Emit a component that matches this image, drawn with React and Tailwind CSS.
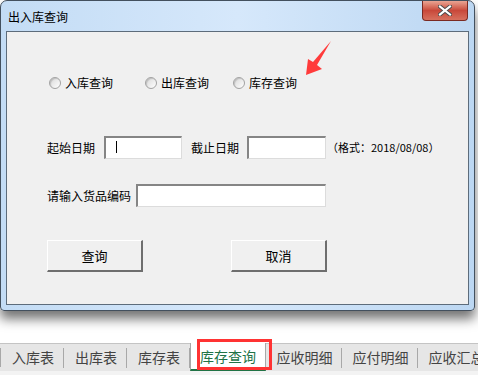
import React from 'react'

const cjk = { fontFamily: '"Noto Sans CJK SC", "Liberation Sans", sans-serif' }

const Radio = ({ label, width }) => (
  <div className="flex items-center gap-[4px]" style={{ width }}>
    <span className="w-[12px] h-[12px] rounded-full border border-[#a2a2a2] bg-gradient-to-br from-[#d8d8d8] to-white shadow-[inset_1px_1px_1px_rgba(0,0,0,0.15)]"></span>
    <span className="text-[12px] leading-none text-black">{label}</span>
  </div>
)

const Field = ({ width, cursor }) => (
  <div
    className="relative h-[23px] bg-white border-t-2 border-l-2 border-t-[#858585] border-l-[#858585] border-r border-b border-r-[#dcdcdc] border-b-[#dcdcdc]"
    style={{ width }}
  >
    {cursor && <span className="absolute left-[10px] top-[3px] w-[1px] h-[12px] bg-black"></span>}
  </div>
)

const Button = ({ children }) => (
  <button className="w-[96px] h-[32px] bg-[#f0f0f0] border-t border-l border-t-white border-l-white border-r-2 border-b-2 border-r-[#6e6e6e] border-b-[#6e6e6e] text-[13px] leading-none text-black">
    {children}
  </button>
)

const tabs = [
  { name: '入库表', w: 63 },
  { name: '出库表', w: 63 },
  { name: '库存表', w: 63 },
  { name: '库存查询', w: 76, active: true },
  { name: '应收明细', w: 76 },
  { name: '应付明细', w: 76 },
  { name: '应收汇总', w: 76 },
]

export default function App() {
  return (
    <div className="relative w-[478px] h-[375px] bg-white overflow-hidden" style={cjk}>
      {/* dialog window */}
      <div className="w-[475px] h-[311px] rounded-t-[7px] rounded-b-[4px] border border-[#43505e] bg-gradient-to-r from-[#c3dcf5] via-[#d6e8fb] to-[#bcd7f2] shadow-[0_8px_12px_rgba(0,0,0,0.55)]">
        <div className="h-[30px] flex justify-between">
          <span className="pl-[7px] pt-[10px] text-[12px] leading-none text-black">出入库查询</span>
          <div className="mr-[6px] w-[46px] h-[20px] rounded-b-[4px] border border-t-0 border-[#7a2a22] bg-gradient-to-b from-[#e9a493] via-[#c8483a] to-[#d7705e] flex items-center justify-center">
            <svg width="14" height="11" viewBox="0 0 14 11">
              <path d="M2 1.5 L12 9.5 M12 1.5 L2 9.5" stroke="#4a4a4a" strokeWidth="4" strokeLinecap="square" />
              <path d="M2 1.5 L12 9.5 M12 1.5 L2 9.5" stroke="#fff" strokeWidth="2.2" strokeLinecap="square" />
            </svg>
          </div>
        </div>
        <div className="mx-[5px] h-[274px] border border-[#5d6c7b] bg-[#f0f0f0]">
          <div className="mt-[43px] pl-[42px] h-[16px] flex items-center">
            <Radio label="入库查询" width={96} />
            <Radio label="出库查询" width={88} />
            <Radio label="库存查询" width={88} />
          </div>
          <div className="mt-[45px] pl-[40px] flex items-center">
            <span className="w-[48px] text-[12px] leading-none">起始日期</span>
            <div className="ml-[9px]"><Field width={78} cursor /></div>
            <span className="ml-[9px] w-[48px] text-[12px] leading-none">截止日期</span>
            <div className="ml-[8px]"><Field width={79} /></div>
            <span className="ml-[1px] text-[11px] leading-none whitespace-nowrap">（格式：2018/08/08）</span>
          </div>
          <div className="mt-[25px] pl-[40px] flex items-center">
            <span className="w-[84px] text-[12px] leading-none">请输入货品编码</span>
            <div className="ml-[5px]"><Field width={190} /></div>
          </div>
          <div className="mt-[33px] pl-[40px] flex gap-[88px]">
            <Button>查询</Button>
            <Button>取消</Button>
          </div>
        </div>
      </div>

      {/* red annotation arrow */}
      <svg className="absolute left-0 top-0" width="478" height="100">
        <polygon points="331,41 317,65 322,69 306,75 308,59 313,62" fill="#ff3b3b" />
      </svg>

      {/* sheet tabs */}
      <div className="mt-[32px] h-[28px] border-t border-[#c4c4c4] bg-[#e6e6e6] flex items-stretch whitespace-nowrap">
        <div className="w-[8px] border-r border-[#a8a8a8] my-[4px]"></div>
        {tabs.map((t) =>
          t.active ? (
            <div
              key={t.name}
              className="shrink-0 -mt-px bg-white border-x border-[#a8a8a8] border-b-2 border-b-[#217346] flex items-center justify-center text-[14px] text-[#217346]"
              style={{ width: t.w }}
            >
              {t.name}
            </div>
          ) : (
            <div key={t.name} className="shrink-0 flex items-center" style={{ width: t.w }}>
              <span className="flex-1 pl-[2px] text-center text-[14px] text-[#444]">{t.name}</span>
              <span className="w-px h-[20px] bg-[#a8a8a8]"></span>
            </div>
          )
        )}
      </div>
      <div className="h-[4px] bg-[#f3f3f3]"></div>

      {/* red highlight box */}
      <div className="absolute left-[197px] top-[339px] w-[75px] h-[31px] border-[3px] border-[#ff3333]"></div>
    </div>
  )
}
